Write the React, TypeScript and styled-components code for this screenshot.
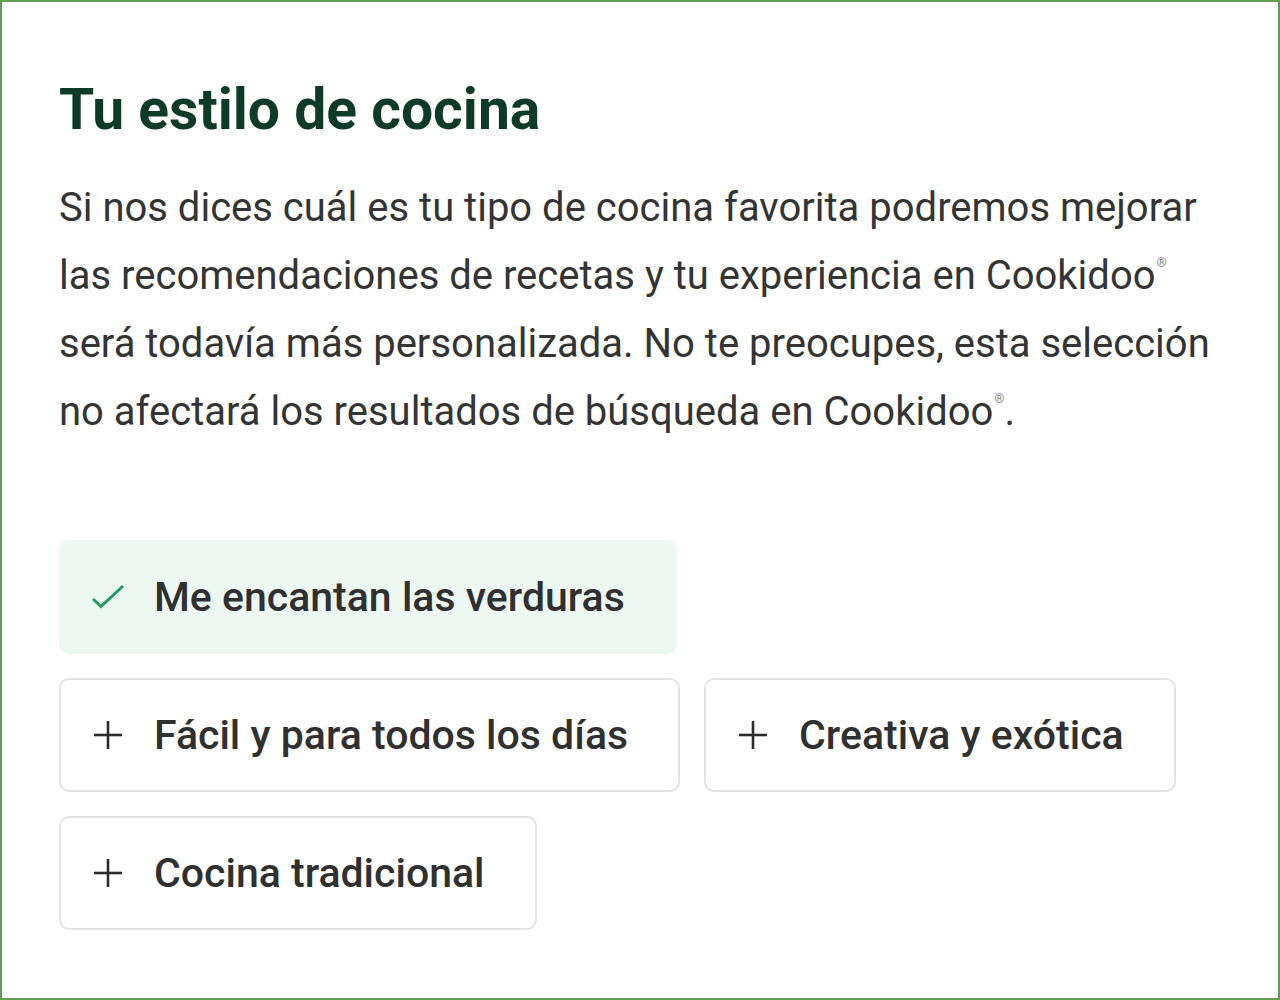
import React from 'react';
import styled, { createGlobalStyle } from 'styled-components';

const GlobalStyle = createGlobalStyle`
  html, body {
    margin: 0;
    padding: 0;
    background: #ffffff;
  }
  body {
    font-family: Roboto, "Noto Sans", Arial, sans-serif;
  }
`;

// --- Icons ---
const CheckIcon = () => (
  <svg width="34" height="34" viewBox="0 0 34 34" fill="none" stroke="#1f9d5c" strokeWidth="3"><polyline points="2 19 10 26.5 32 6" /></svg>
);

const PlusIcon = () => (
  <svg width="34" height="34" viewBox="0 0 34 34" fill="none" stroke="#2b2b2b" strokeWidth="2.6"><line x1="17" y1="3" x2="17" y2="31" /><line x1="3" y1="17" x2="31" y2="17" /></svg>
);

// --- Styled Components ---
const Frame = styled.div`
  box-sizing: border-box;
  width: 1280px;
  height: 1000px;
  border: 2px solid #629c4e;
  background: #ffffff;
  padding: 74px 56px 0 57px;
`;

const Title = styled.h1`
  margin: 0;
  font-size: 57px;
  line-height: 68px;
  font-weight: 700;
  color: #0d3b27;
`;

const Intro = styled.p`
  margin: 30px 0 0;
  font-size: 40px;
  line-height: 68px;
  font-weight: 400;
  color: #343434;
  max-width: 1160px;
`;

const Reg = styled.sup`
  display: inline-block;
  font-size: 13px;
  line-height: 13px;
  color: #888;
  vertical-align: 22px;
  margin-left: 1px;
`;

const ChipList = styled.div`
  display: flex;
  flex-wrap: wrap;
  gap: 24px;
  margin-top: 94px;
  max-width: 1164px;
`;

const Chip = styled.div<{ $selected?: boolean }>`
  box-sizing: border-box;
  height: 114px;
  display: flex;
  align-items: center;
  gap: 29px;
  padding: 0 50px 0 30px;
  border-radius: 10px;
  border: 2px solid ${({ $selected }) => ($selected ? '#eef8f3' : '#e4e4e4')};
  background: ${({ $selected }) => ($selected ? '#eef8f3' : '#ffffff')};
  font-size: 41px;
  font-weight: 500;
  color: #303030;
`;

const styles = [
  { label: 'Me encantan las verduras', selected: true },
  { label: 'Fácil y para todos los días', selected: false },
  { label: 'Creativa y exótica', selected: false },
  { label: 'Cocina tradicional', selected: false },
];

const App = () => (
  <>
    <GlobalStyle />
    <Frame>
      <Title>Tu estilo de cocina</Title>
      <Intro>
        Si nos dices cuál es tu tipo de cocina favorita podremos mejorar las recomendaciones de recetas y tu experiencia en Cookidoo<Reg>®</Reg> será todavía más personalizada. No te preocupes, esta selección no afectará los resultados de búsqueda en Cookidoo<Reg>®</Reg>.
      </Intro>
      <ChipList>
        {styles.map((s) => (
          <Chip key={s.label} $selected={s.selected}>
            {s.selected ? <CheckIcon /> : <PlusIcon />}
            {s.label}
          </Chip>
        ))}
      </ChipList>
    </Frame>
  </>
);

export default App;
